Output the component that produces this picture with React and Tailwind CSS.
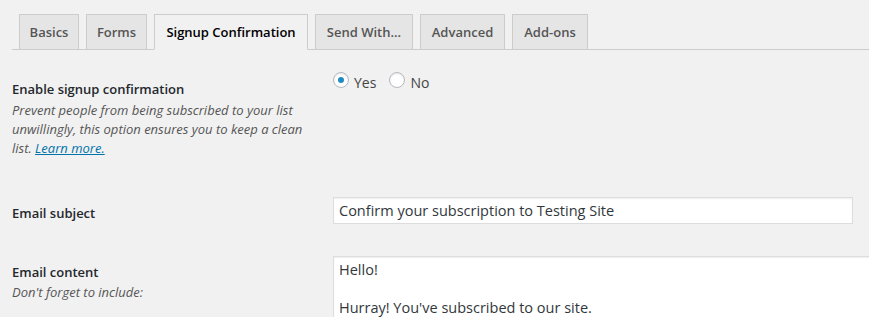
import React, { useState } from "react";

const tabs = [
  { label: "Basics", w: "w-[60px]" },
  { label: "Forms", w: "w-[61px]" },
  { label: "Signup Confirmation", w: "w-[154px]" },
  { label: "Send With...", w: "w-[98px]" },
  { label: "Advanced", w: "w-[85px]" },
  { label: "Add-ons", w: "w-[76px]" },
];

function Radio({ checked, label, onClick }) {
  return (
    <label className="flex items-start cursor-pointer" onClick={onClick}>
      <span className="w-4 h-4 rounded-full border border-[#b4b9be] bg-white shadow-[inset_0_1px_2px_rgba(0,0,0,0.1)] flex items-center justify-center">
        {checked && <span className="w-[6px] h-[6px] rounded-full bg-[#1e8cbe]" />}
      </span>
      <span className="ml-[5px] mt-[1px] text-[14px] leading-[20px] text-[#444]">{label}</span>
    </label>
  );
}

export default function App() {
  const [active, setActive] = useState("Signup Confirmation");
  const [enabled, setEnabled] = useState(true);

  return (
    <div
      className="h-[317px] bg-[#f1f1f1] overflow-hidden"
      style={{ fontFamily: '"Open Sans", "Noto Sans", sans-serif' }}
    >
      <div className="pt-[14px] pl-3">
        <div className="flex border-b border-[#ccc]">
          {tabs.map((t) => {
            const isActive = t.label === active;
            return (
              <button
                key={t.label}
                onClick={() => setActive(t.label)}
                className={
                  "ml-[7px] -mb-px h-[36px] border text-[13px] font-semibold leading-[24px] text-center whitespace-nowrap " +
                  t.w +
                  (isActive
                    ? " bg-[#f1f1f1] border-[#ccc] border-b-[#f1f1f1] text-black"
                    : " bg-[#e5e5e5] border-[#ccc] text-[#555]")
                }
              >
                {t.label}
              </button>
            );
          })}
        </div>

        <div className="flex mt-[22px]">
          <div className="w-[321px] pt-[7px] pr-[12px]">
            <div className="text-[13px] leading-[20px] font-semibold text-[#23282d]">
              Enable signup confirmation
            </div>
            <p className="mt-[2px] text-[13px] leading-[19px] italic font-medium text-[#555]">
              Prevent people from being subscribed to your list unwillingly, this option ensures you to keep a clean list.{" "}
              <a href="#" className="text-[#0073aa] underline">Learn more.</a>
            </p>
          </div>
          <div className="flex gap-[13px]">
            <Radio checked={enabled} label="Yes" onClick={() => setEnabled(true)} />
            <Radio checked={!enabled} label="No" onClick={() => setEnabled(false)} />
          </div>
        </div>

        <div className="flex mt-[39px]">
          <div className="w-[321px] pt-[6px] text-[13px] leading-[20px] font-semibold text-[#23282d]">
            Email subject
          </div>
          <input
            type="text"
            defaultValue="Confirm your subscription to Testing Site"
            className="w-[520px] h-[27px] px-[5px] bg-white border border-[#ddd] shadow-[inset_0_1px_2px_rgba(0,0,0,0.07)] text-[14.5px] text-[#32373c] outline-none"
          />
        </div>

        <div className="flex mt-[32px]">
          <div className="w-[321px] shrink-0 pt-[6px]">
            <div className="text-[13px] leading-[20px] font-semibold text-[#23282d]">Email content</div>
            <p className="mt-[1px] text-[13px] leading-[19px] italic font-medium text-[#555]">
              Don't forget to include:
            </p>
          </div>
          <textarea
            defaultValue={"Hello!\n\nHurray! You've subscribed to our site."}
            className="w-[560px] shrink-0 h-[120px] px-[5px] py-[3px] bg-white border border-[#ddd] shadow-[inset_0_1px_2px_rgba(0,0,0,0.07)] text-[14.5px] leading-[19px] text-[#32373c] outline-none resize-none"
          />
        </div>
      </div>
    </div>
  );
}
